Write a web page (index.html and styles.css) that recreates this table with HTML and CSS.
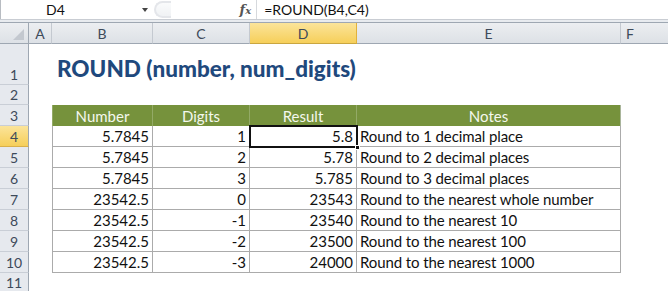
FILE: index.html
```html
<!DOCTYPE html>
<html>
<head>
<meta charset="utf-8">
<link rel="stylesheet" href="styles.css">
</head>
<body>
<div class="app">
  <div class="fbar">
    <div class="namebox"><span class="name">D4</span><span class="drop"></span></div>
    <div class="grip"></div>
    <div class="fx">f<span class="x">x</span></div>
    <div class="formula">=ROUND(B4,C4)</div>
  </div>
  <div class="strip"></div>
  <div class="sheet">
    <div class="ch corner"><span class="tri"></span></div>
    <div class="ch">A</div>
    <div class="ch">B</div>
    <div class="ch">C</div>
    <div class="ch sel">D</div>
    <div class="ch">E</div>
    <div class="ch last">F</div>

    <div class="rh">1</div>
    <div class="c"></div>
    <div class="c title-cell"><span class="title">ROUND (number, num_digits)</span></div>
    <div class="c"></div><div class="c"></div><div class="c"></div><div class="c"></div>

    <div class="rh">2</div>
    <div class="c"></div><div class="c"></div><div class="c"></div><div class="c"></div><div class="c"></div><div class="c"></div>

    <div class="rh">3</div>
    <div class="c"></div>
    <div class="th first">Number</div>
    <div class="th">Digits</div>
    <div class="th">Result</div>
    <div class="th lastc">Notes</div>
    <div class="c"></div>

    <div class="rh sel">4</div>
    <div class="c"></div>
    <div class="td num first">5.7845</div>
    <div class="td num">1</div>
    <div class="td num active">5.8<span class="handle"></span></div>
    <div class="td note">Round to 1 decimal place</div>
    <div class="c"></div>

    <div class="rh">5</div>
    <div class="c"></div>
    <div class="td num first">5.7845</div>
    <div class="td num">2</div>
    <div class="td num">5.78</div>
    <div class="td note">Round to 2 decimal places</div>
    <div class="c"></div>

    <div class="rh">6</div>
    <div class="c"></div>
    <div class="td num first">5.7845</div>
    <div class="td num">3</div>
    <div class="td num">5.785</div>
    <div class="td note">Round to 3 decimal places</div>
    <div class="c"></div>

    <div class="rh">7</div>
    <div class="c"></div>
    <div class="td num first">23542.5</div>
    <div class="td num">0</div>
    <div class="td num">23543</div>
    <div class="td note">Round to the nearest whole number</div>
    <div class="c"></div>

    <div class="rh">8</div>
    <div class="c"></div>
    <div class="td num first">23542.5</div>
    <div class="td num">-1</div>
    <div class="td num">23540</div>
    <div class="td note">Round to the nearest 10</div>
    <div class="c"></div>

    <div class="rh">9</div>
    <div class="c"></div>
    <div class="td num first">23542.5</div>
    <div class="td num">-2</div>
    <div class="td num">23500</div>
    <div class="td note">Round to the nearest 100</div>
    <div class="c"></div>

    <div class="rh">10</div>
    <div class="c"></div>
    <div class="td num first">23542.5</div>
    <div class="td num">-3</div>
    <div class="td num">24000</div>
    <div class="td note">Round to the nearest 1000</div>
    <div class="c"></div>

    <div class="rh">11</div>
    <div class="c"></div><div class="c"></div><div class="c"></div><div class="c"></div><div class="c"></div><div class="c"></div>
  </div>
</div>
</body>
</html>
```

FILE: styles.css
```css
* { box-sizing: border-box; }
html, body { margin: 0; padding: 0; background: #fff; }
body { width: 668px; height: 291px; overflow: hidden; font-family: Lato, "Open Sans", sans-serif; }

.app { display: flex; flex-direction: column; }

.fbar {
  height: 19px;
  display: flex;
  align-items: center;
  background: #fff;
  font-size: 14px;
  color: #111;
}
.namebox {
  width: 158px;
  height: 19px;
  display: flex;
  align-items: center;
  border-left: 1px solid #b8bcc2;
  position: relative;
}
.name { flex: 1; text-align: center; padding-left: 8px; padding-right: 40px; }
.drop {
  width: 0; height: 0;
  border-left: 3px solid transparent;
  border-right: 3px solid transparent;
  border-top: 4px solid #444;
  margin-right: 6px;
}
.grip {
  width: 18px; height: 17px;
  border: 2px solid #e4e6ea;
  border-right: none;
  border-radius: 10px 0 0 10px;
  background: linear-gradient(#fafbfc, #f0f2f4);
}
.fx {
  margin-left: auto;
  width: 88px;
  text-align: right;
  padding-right: 5px;
  font-family: "DejaVu Serif", "Liberation Serif", serif;
  font-style: italic;
  font-weight: bold;
  font-size: 13px;
  color: #555;
  border-right: 1px solid #d6d9dd;
  height: 19px;
  line-height: 19px;
}
.fx .x { font-size: 10px; }
.formula { padding-left: 7px; width: 422px; font-size: 14px; }

.strip {
  height: 4px;
  border-top: 1px solid #c9cdd3;
  border-bottom: 1px solid #9ea7b2;
  background: #e8ebef;
}

.sheet {
  display: grid;
  grid-template-columns: 29px 23px 101px 97px 107px 264px 47px;
  grid-template-rows: 21px 41px 20px repeat(8, 21px) 20px;
  font-size: 15px;
}

.ch {
  display: flex;
  align-items: center;
  justify-content: center;
  background: linear-gradient(#eceef1, #dde1e6);
  border-right: 1px solid #c4c9d0;
  border-bottom: 1px solid #9ea7b2;
  color: #3d4a5a;
  font-size: 14px;
  padding-top: 1px;
}
.ch.corner { border-right: 1px solid #9ea7b2; position: relative; }
.ch.sel { background: linear-gradient(#fbe49a, #f6cf5a); border-right-color: #e2b23b; border-bottom-color: #c9a640; }
.ch.last { justify-content: flex-start; padding-left: 5px; border-right: none; }
.tri {
  position: absolute; right: 4px; bottom: 3px;
  width: 0; height: 0;
  border-left: 11px solid transparent;
  border-bottom: 11px solid #c3c8cf;
}

.rh {
  display: flex;
  align-items: flex-end;
  justify-content: center;
  padding-bottom: 1px;
  background: #e6e9ee;
  border-right: 1px solid #9ea7b2;
  border-bottom: 1px solid #c9ced6;
  color: #3d4a5a;
  font-size: 14px;
  line-height: 17px;
}
.rh.sel { background: linear-gradient(#fbe49a, #f6cf5a); border-bottom-color: #d9b04a; }

.c { background: #fff; }
.title-cell { position: relative; overflow: visible; display: flex; align-items: flex-end; }
.title {
  white-space: nowrap;
  padding-left: 5px;
  padding-bottom: 3px;
  font-weight: 900;
  font-size: 22.5px;
  color: #1f497d;
  line-height: 26px;
}

.th {
  background: #76923c;
  color: #f4f8ee;
  display: flex;
  align-items: flex-end;
  justify-content: center;
  padding-bottom: 1px;
  border-right: 1px solid #93aa66;
  line-height: 17px;
}
.th.first { border-left: 1px solid #93aa66; }
.th.lastc { border-right: 1px solid #a9b59a; }

.td {
  display: flex;
  align-items: flex-end;
  padding: 0 3px 1px 3px;
  border-right: 1px solid #ababab;
  border-bottom: 1px solid #ababab;
  color: #111;
  line-height: 17px;
  white-space: nowrap;
}
.td.first { border-left: 1px solid #ababab; }
.td.note { letter-spacing: -0.1px; }
.num { justify-content: flex-end; }
.note { justify-content: flex-start; }
.active { position: relative; outline: 2px solid #111; outline-offset: -1px; z-index: 1; }
.handle {
  position: absolute; right: -4px; bottom: -4px;
  width: 5px; height: 5px;
  background: #111;
  border: 1px solid #fff;
}
```
